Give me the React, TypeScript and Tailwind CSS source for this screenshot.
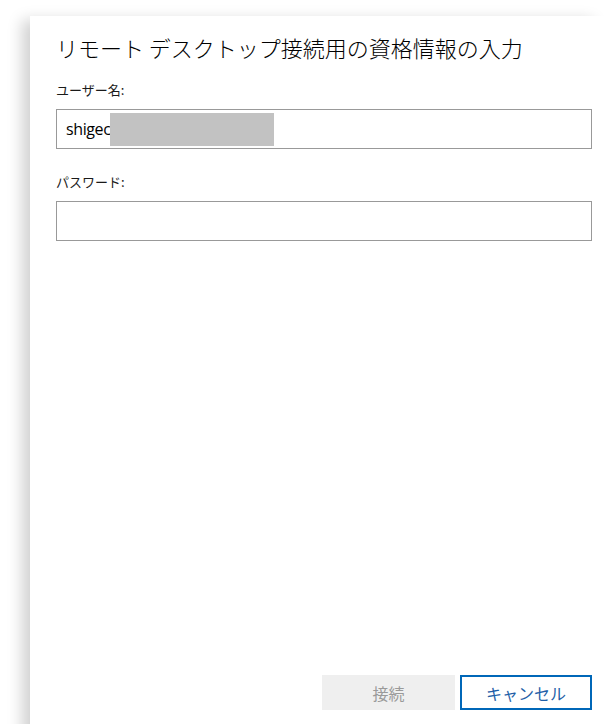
export default function App() {
  return (
    <div className="h-[724px] w-[609px] overflow-hidden bg-white pt-4 pl-[30px] font-['Noto_Sans_CJK_JP','Noto_Sans',sans-serif]">
      <div className="relative flex h-[760px] flex-col bg-white pl-[26px] pr-[17px] shadow-[-12px_0_14px_-4px_rgba(0,0,0,0.18)]">
        <h1 className="mt-[16px] text-[22px] leading-[30px] font-light text-black">
          リモート デスクトップ接続用の資格情報の入力
        </h1>

        <label className="mt-[20px] text-[13px] leading-[16px] text-[#1a1a1a]">ユーザー名:</label>
        <div className="mt-[11px] flex h-[40px] items-center border border-[#999] pl-[9px]">
          <span className="font-['Open_Sans',sans-serif] text-[16px] tracking-[-0.4px] text-black">shigec</span>
          <div className="h-[33px] w-[164px] bg-[#c2c2c2]" />
        </div>

        <label className="mt-[25px] text-[13px] leading-[16px] text-[#1a1a1a]">パスワード:</label>
        <div className="mt-[11px] h-[40px] border border-[#999]" />

        <div className="mt-[434px] flex justify-end gap-[5px]">
          <button className="flex h-[35px] w-[133px] items-center justify-center bg-[#efefef] text-[16px] text-[#9a9a9a]">
            接続
          </button>
          <button className="flex h-[35px] w-[132px] items-center justify-center border-2 border-[#0067b8] bg-white text-[16px] text-[#1f5fa8]">
            キャンセル
          </button>
        </div>
      </div>
    </div>
  );
}
